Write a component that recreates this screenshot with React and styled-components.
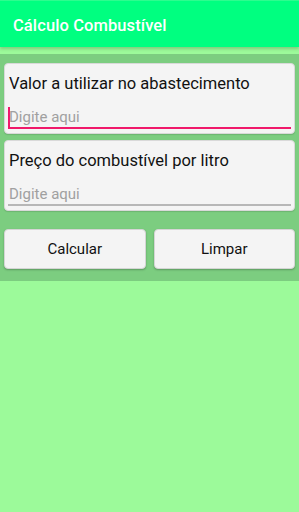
import * as React from 'react';
import styled, { createGlobalStyle } from 'styled-components';

const GlobalStyle = createGlobalStyle`
  html, body {
    margin: 0;
    padding: 0;
    background: #9cfa9a;
    font-family: Roboto, 'Noto Sans', sans-serif;
  }
`;

const Screen = styled.div`
  width: 299px;
  min-height: 512px;
  background: #9cfa9a;
`;

const AppBar = styled.header`
  height: 47px;
  background: #00ff80;
  border-top: 1px solid #2dfc8e;
  box-sizing: border-box;
  display: flex;
  align-items: center;
  padding: 2px 13px 0;
  box-shadow: 0 2px 3px rgba(0, 0, 0, 0.18);
  position: relative;
  z-index: 1;
`;

const Title = styled.h1`
  margin: 0;
  color: #ffffff;
  font-size: 16.5px;
  font-weight: 500;
  letter-spacing: 0.1px;
`;

const Gap = styled.div`
  height: 7px;
`;

const Panel = styled.main`
  background: #7ccd80;
  padding: 9px 4px 12px 4px;
  display: flex;
  flex-direction: column;
  gap: 6px;
`;

const Card = styled.div`
  background: #f4f4f4;
  border: 1px solid #d9d9d9;
  border-radius: 4px;
  box-shadow: 0 1px 1px rgba(0, 0, 0, 0.12);
  padding: 9px 3px 4px 3px;
  display: flex;
  flex-direction: column;
`;

const Label = styled.div`
  color: #111;
  font-size: 16.5px;
  line-height: 22px;
  padding-left: 1px;
`;

const Field = styled.div`
  margin-top: 11px;
  height: 21px;
  display: flex;
  align-items: center;
  border-bottom: 2px solid ${(p) => (p.$focused ? '#f0196a' : '#b7b7b7')};
`;

const Placeholder = styled.span`
  color: #a0a0a0;
  font-size: 15px;
  padding-left: ${(p) => (p.$focused ? '0' : '1px')};
`;

const Cursor = styled.span`
  width: 2px;
  height: 20px;
  background: #f0196a;
  margin-right: -1px;
`;

const ButtonRow = styled.div`
  display: grid;
  grid-template-columns: 1fr 1fr;
  gap: 8px;
  margin-top: 12px;
`;

const Button = styled.button`
  height: 40px;
  background: #f4f4f4;
  border: 1px solid #d5d5d5;
  border-radius: 4px;
  box-shadow: 0 1px 2px rgba(0, 0, 0, 0.25);
  font-family: Roboto, 'Noto Sans', sans-serif;
  font-size: 15px;
  color: #111;
  padding: 0;
`;

export default function App() {
  return (
    <>
      <GlobalStyle />
      <Screen>
        <AppBar>
          <Title>Cálculo Combustível</Title>
        </AppBar>
        <Gap />
        <Panel>
          <Card>
            <Label>Valor a utilizar no abastecimento</Label>
            <Field $focused>
              <Cursor />
              <Placeholder $focused>Digite aqui</Placeholder>
            </Field>
          </Card>
          <Card>
            <Label>Preço do combustível por litro</Label>
            <Field>
              <Placeholder>Digite aqui</Placeholder>
            </Field>
          </Card>
          <ButtonRow>
            <Button>Calcular</Button>
            <Button>Limpar</Button>
          </ButtonRow>
        </Panel>
      </Screen>
    </>
  );
}
